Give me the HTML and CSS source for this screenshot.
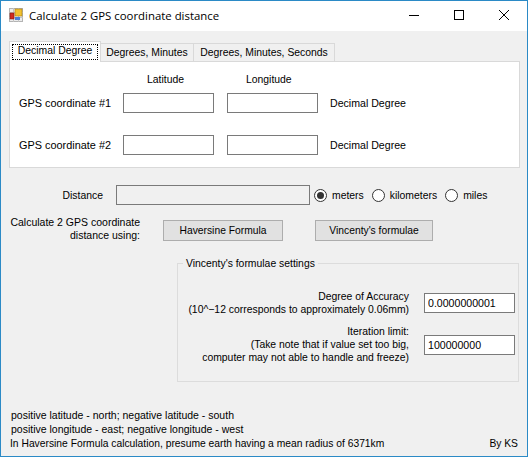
FILE: index.html
```html
<!DOCTYPE html>
<html lang="en">

<head>
    <meta charset="UTF-8">
    <meta name="viewport" content="width=device-width, initial-scale=1.0">
    <title>Calculate 2 GPS coordinate distance</title>
    <link rel="stylesheet" href="styles.css">
</head>

<body>
    <div class="window">
        <div class="titlebar">
            <svg class="app-icon" width="14" height="14" viewBox="0 0 14 14">
                <rect x="0" y="0" width="14" height="14" fill="#b4b4b4" />
                <rect x="1" y="1" width="12" height="12" fill="#ececec" />
                <path d="M0 4.5H14M0 9.5H14M4.5 0V14M9.5 0V14" stroke="#c4c4c4" stroke-width="1" />
                <rect x="6" y="1" width="7" height="7" fill="#f2c230" stroke="#a87c10" stroke-width="0.6" />
                <rect x="1" y="5" width="4" height="6" fill="#d02a20" stroke="#801810" stroke-width="0.6" />
                <rect x="6" y="9" width="5" height="3" fill="#4a80d8" />
            </svg>
            <span class="title">Calculate 2 GPS coordinate distance</span>
            <div class="controls">
                <svg width="12" height="12" viewBox="0 0 12 12">
                    <path d="M1 6.5H11" stroke="#000" stroke-width="1" />
                </svg>
                <svg width="12" height="12" viewBox="0 0 12 12">
                    <rect x="1.5" y="1.5" width="9" height="9" fill="none" stroke="#000" stroke-width="1" />
                </svg>
                <svg width="12" height="12" viewBox="0 0 12 12">
                    <path d="M1 1L11 11M11 1L1 11" stroke="#000" stroke-width="1" />
                </svg>
            </div>
        </div>

        <div class="content">
            <div class="tabs">
                <div class="tab active"><span class="focus">Decimal Degree</span></div>
                <div class="tab tab-dm">Degrees, Minutes</div>
                <div class="tab tab-dms">Degrees, Minutes, Seconds</div>
            </div>
            <div class="tab-page">
                <div class="coord-head">
                    <span class="lat">Latitude</span>
                    <span>Longitude</span>
                </div>
                <div class="coord-grid">
                    <span class="coord-label">GPS coordinate #1</span>
                    <input class="field" type="text">
                    <input class="field" type="text">
                    <span class="unit">Decimal Degree</span>

                    <span class="coord-label">GPS coordinate #2</span>
                    <input class="field" type="text">
                    <input class="field" type="text">
                    <span class="unit">Decimal Degree</span>
                </div>
            </div>

            <div class="distance-row">
                <span class="distance-label">Distance</span>
                <input class="distance-box" type="text" disabled>
                <div class="radios">
                    <label class="radio"><span class="dot checked"></span>meters</label>
                    <label class="radio"><span class="dot"></span>kilometers</label>
                    <label class="radio"><span class="dot"></span>miles</label>
                </div>
            </div>

            <div class="calc-row">
                <span class="calc-label">Calculate 2 GPS coordinate<br>distance using:</span>
                <button class="btn haversine">Haversine Formula</button>
                <button class="btn vincenty">Vincenty's formulae</button>
            </div>

            <fieldset class="settings">
                <legend>Vincenty's formulae settings</legend>
                <div class="setting accuracy">
                    <span class="setting-label">Degree of Accuracy<br>(10^−12 corresponds to approximately 0.06mm)</span>
                    <input class="field" type="text" value="0.0000000001">
                </div>
                <div class="setting">
                    <span class="setting-label">Iteration limit:<br>(Take note that if value set too big,<br>computer may not able to handle and freeze)</span>
                    <input class="field" type="text" value="100000000">
                </div>
            </fieldset>

            <div class="notes">
                <p>positive latitude - north; negative latitude - south</p>
                <p>positive longitude - east; negative longitude - west</p>
            </div>
            <div class="footer">
                <span>In Haversine Formula calculation, presume earth having a mean radius of 6371km</span>
                <span>By KS</span>
            </div>
        </div>
    </div>
</body>

</html>
```

FILE: styles.css
```css
html,
body {
    margin: 0;
    height: 100%;
    background: #ffffff;
}

body {
    font-family: 'Liberation Sans', Arial, sans-serif;
    font-size: 10.4px;
    color: #000;
}

.window {
    width: 528px;
    height: 457px;
    box-sizing: border-box;
    border: 1px solid #2b8ac6;
    display: flex;
    flex-direction: column;
    background: #f0f0f0;
}

.titlebar {
    height: 30px;
    flex: none;
    box-sizing: border-box;
    background: #fff;
    display: flex;
    align-items: center;
    padding: 0 0 2px 8px;
}

.app-icon {
    flex: none;
    margin-right: 6px;
}

.title {
    font-family: 'Open Sans', sans-serif;
    font-size: 11.4px;
}

.controls {
    margin-left: auto;
    display: flex;
    gap: 33px;
    padding-right: 17px;
}

.controls svg {
    display: block;
}

.content {
    flex: 1;
    padding: 10px 7px 0 8px;
    display: flex;
    flex-direction: column;
}

.tabs {
    display: flex;
    height: 21px;
    align-items: flex-end;
    position: relative;
    z-index: 1;
    margin-bottom: -1px;
}

.tab {
    height: 19px;
    line-height: 17px;
    box-sizing: border-box;
    border: 1px solid #d9d9d9;
    border-left: none;
    background: #f0f0f0;
    text-align: center;
    white-space: nowrap;
}

.tab-dm {
    width: 93px;
}

.tab-dms {
    width: 141px;
}

.tab.active {
    width: 92px;
    height: 21px;
    padding: 2px 2px 0;
    background: #fff;
    border-left: 1px solid #d9d9d9;
    border-bottom: none;
}

.focus {
    display: block;
    height: 16px;
    line-height: 12px;
    box-sizing: border-box;
    border: 1px dotted #000;
}

.tab-page {
    height: 107px;
    flex: none;
    box-sizing: border-box;
    background: #fff;
    border: 1px solid #d9d9d9;
    padding: 12px 0 0 9px;
}

.coord-head {
    display: flex;
    height: 12px;
    line-height: 12px;
    margin-bottom: 7px;
    padding-left: 128px;
}

.lat {
    width: 99px;
}

.coord-grid {
    display: grid;
    grid-template-columns: 104px 104px 91px auto;
    row-gap: 22px;
    align-items: center;
}

.coord-label {
    font-size: 10.9px;
    white-space: nowrap;
}

.field {
    box-sizing: border-box;
    height: 20px;
    width: 91px;
    border: 1px solid #7a7a7a;
    background: #fff;
    padding: 0 3px;
    margin: 0;
    font-family: inherit;
    font-size: 10.6px;
    color: #000;
    outline: none;
}

.unit {
    font-size: 10.6px;
    padding-left: 12px;
    white-space: nowrap;
}

.distance-row {
    display: flex;
    align-items: center;
    height: 20px;
    margin-top: 17px;
}

.distance-label {
    width: 94px;
    text-align: right;
    margin-right: 13px;
}

.distance-box {
    box-sizing: border-box;
    width: 194px;
    height: 20px;
    margin: 0;
    border: 1px solid #7a7a7a;
    background: #f0f0f0;
}

.radios {
    display: flex;
    margin-left: 4px;
}

.radio {
    display: flex;
    align-items: center;
    gap: 5px;
    margin-right: 8px;
}

.dot {
    box-sizing: border-box;
    width: 13px;
    height: 13px;
    border: 1px solid #333;
    border-radius: 50%;
    background: #fff;
    display: flex;
    align-items: center;
    justify-content: center;
}

.dot.checked::after {
    content: "";
    width: 7px;
    height: 7px;
    border-radius: 50%;
    background: #333;
}

.calc-row {
    display: flex;
    align-items: flex-start;
    margin-top: 11px;
    height: 30px;
}

.calc-label {
    font-size: 10.5px;
    width: 131px;
    text-align: right;
    line-height: 13px;
    margin-right: 23px;
    white-space: nowrap;
}

.btn {
    box-sizing: border-box;
    height: 21px;
    margin: 4px 0 0;
    padding: 0;
    border: 1px solid #adadad;
    background: #e1e1e1;
    font-family: inherit;
    font-size: 10.3px;
    color: #000;
}

.haversine {
    width: 120px;
    margin-right: 32px;
}

.vincenty {
    width: 118px;
}

.settings {
    box-sizing: border-box;
    width: 342px;
    height: 125px;
    margin: 11px 0 0 168px;
    padding: 20px 3px 0 0;
    border: 1px solid #dcdcdc;
}

.settings legend {
    padding: 0 3px;
    margin-left: 5px;
    line-height: 13px;
}

.setting {
    display: flex;
    justify-content: flex-end;
    align-items: center;
    gap: 15px;
}

.accuracy {
    margin-bottom: 9px;
}

.setting-label {
    text-align: right;
    line-height: 13px;
    white-space: nowrap;
}

.settings .field {
    flex: none;
}

.notes {
    font-size: 10.5px;
    margin: 26px 0 0 2px;
}

.notes p {
    margin: 0;
    line-height: 14px;
}

.footer {
    display: flex;
    justify-content: space-between;
    font-size: 10.3px;
    margin: 1px 0 0 1px;
    padding-right: 2px;
    line-height: 13px;
}
```
